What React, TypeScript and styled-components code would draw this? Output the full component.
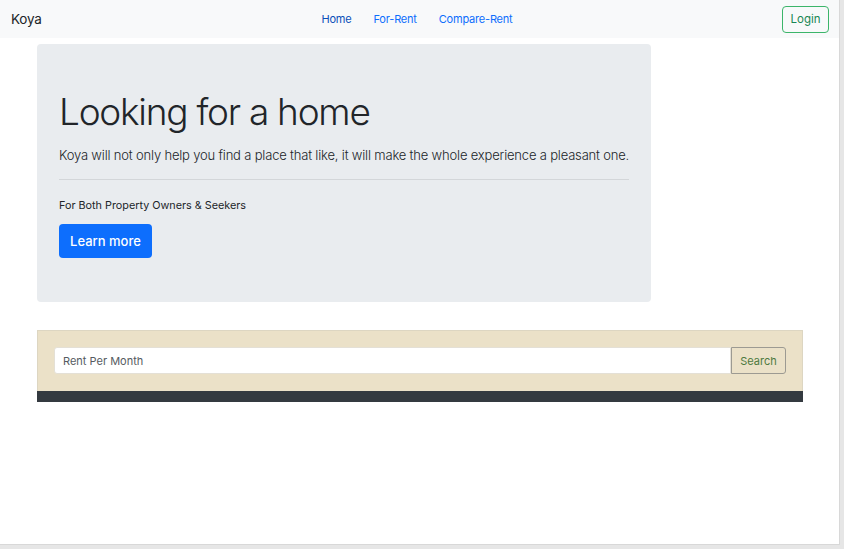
import React from "react";
import styled, { createGlobalStyle } from "styled-components";

const Global = createGlobalStyle`
  html, body { margin: 0; padding: 0; background: #e6e6e6; }
  body { font-family: Inter, "Noto Sans", "Liberation Sans", sans-serif; color: #212529; }
  * { box-sizing: border-box; }
`;

const Frame = styled.div`
  width: 840px;
  height: 545px;
  background: #fff;
  border-right: 1px solid #d8d8d8;
  border-bottom: 1px solid #d8d8d8;
  display: flex;
  flex-direction: column;
`;

const Nav = styled.nav`
  height: 38px;
  background: #f8f9fa;
  display: grid;
  grid-template-columns: 1fr auto 1fr;
  align-items: center;
  padding: 0 10px 0 11px;
`;

const Brand = styled.div`
  font-size: 13.5px;
  color: #212529;
  letter-spacing: -0.2px;
`;

const Links = styled.div`
  display: flex;
  gap: 22px;
  font-size: 11px;
  letter-spacing: -0.2px;
  transform: translateX(-3px);
`;

const NavLink = styled.a<{ $active?: boolean }>`
  color: ${(p) => (p.$active ? "#0a4fb8" : "#0d6efd")};
  text-decoration: none;
`;

const LoginBtn = styled.button`
  justify-self: end;
  font-family: inherit;
  font-size: 11.5px;
  color: #198754;
  background: transparent;
  border: 1px solid #3cb56a;
  border-radius: 4px;
  height: 27px;
  width: 47px;
  padding: 0;
`;

const Main = styled.main`
  padding: 6px 0 0 37px;
  display: flex;
  flex-direction: column;
`;

const Hero = styled.section`
  width: 614px;
  height: 258px;
  background: #e9ecef;
  border-radius: 4px;
  padding: 45px 22px 0 22px;
`;

const Title = styled.h1`
  margin: 0;
  font-size: 37px;
  font-weight: 300;
  line-height: 46px;
  letter-spacing: -1.25px;
`;

const Lead = styled.p`
  margin: 10px 0 0 0;
  font-size: 13px;
  line-height: 20px;
  font-weight: 300;
  letter-spacing: -0.18px;
  white-space: nowrap;
`;

const Rule = styled.hr`
  margin: 14px 0 18px 0;
  border: 0;
  border-top: 1px solid #d3d6d9;
`;

const Small = styled.p`
  margin: 0;
  font-size: 10.8px;
  line-height: 16px;
`;

const PrimaryBtn = styled.button`
  margin-top: 10px;
  font-family: inherit;
  font-size: 13px;
  font-weight: 500;
  color: #fff;
  background: #0d6efd;
  border: 0;
  border-radius: 4px;
  width: 93px;
  height: 34px;
  padding: 0;
`;

const SearchBlock = styled.section`
  margin-top: 28px;
  width: 766px;
  display: flex;
  flex-direction: column;
`;

const SearchBar = styled.div`
  background: #ebe1c8;
  border: 1px solid #ddd6c2;
  border-bottom: 0;
  padding: 16px;
  height: 61px;
  display: flex;
`;

const Input = styled.div`
  flex: 1;
  height: 27px;
  background: #fff;
  border: 1px solid #e4e0d6;
  border-radius: 3px 0 0 3px;
  font-size: 11px;
  color: #555b61;
  display: flex;
  align-items: center;
  padding-left: 8px;
`;

const SearchBtn = styled.button`
  font-family: inherit;
  width: 55px;
  height: 27px;
  background: #ebe1c8;
  border: 1px solid #9c9a92;
  border-radius: 0 3px 3px 0;
  color: #4e7a3f;
  font-size: 11px;
  padding: 0;
`;

const DarkBar = styled.div`
  height: 11px;
  background: #343a40;
`;

export default function App() {
  return (
    <>
      <Global />
      <Frame>
        <Nav>
          <Brand>Koya</Brand>
          <Links>
            <NavLink $active>Home</NavLink>
            <NavLink>For-Rent</NavLink>
            <NavLink>Compare-Rent</NavLink>
          </Links>
          <LoginBtn>Login</LoginBtn>
        </Nav>
        <Main>
          <Hero>
            <Title>Looking for a home</Title>
            <Lead>Koya will not only help you find a place that like, it will make the whole experience a pleasant one.</Lead>
            <Rule />
            <Small>For Both Property Owners &amp; Seekers</Small>
            <PrimaryBtn>Learn more</PrimaryBtn>
          </Hero>
          <SearchBlock>
            <SearchBar>
              <Input>Rent Per Month</Input>
              <SearchBtn>Search</SearchBtn>
            </SearchBar>
            <DarkBar />
          </SearchBlock>
        </Main>
      </Frame>
    </>
  );
}
